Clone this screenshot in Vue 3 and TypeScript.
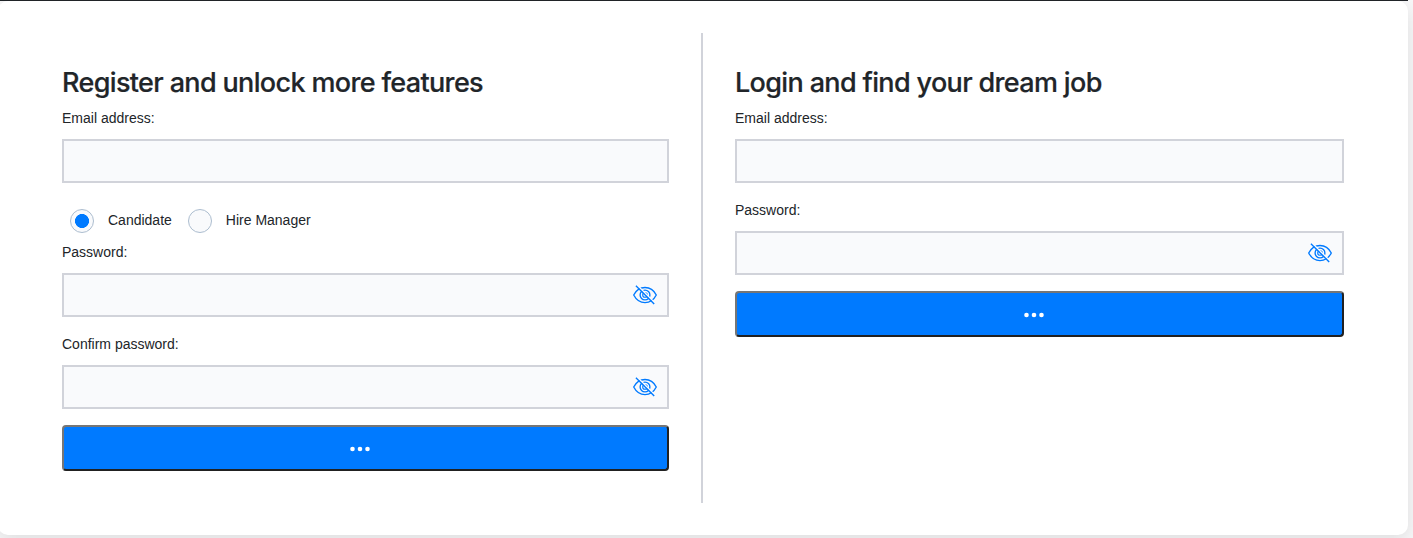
<script setup lang="ts">
import { ref } from 'vue'

interface Field {
  id: string
  label: string
  password: boolean
}

interface Panel {
  id: string
  title: string
  roles: string[]
  fields: Field[]
}

const role = ref('Candidate')

const panels: Panel[] = [
  {
    id: 'register',
    title: 'Register and unlock more features',
    roles: ['Candidate', 'Hire Manager'],
    fields: [
      { id: 'register-email', label: 'Email address:', password: false },
      { id: 'register-password', label: 'Password:', password: true },
      { id: 'register-confirm', label: 'Confirm password:', password: true },
    ],
  },
  {
    id: 'login',
    title: 'Login and find your dream job',
    roles: [],
    fields: [
      { id: 'login-email', label: 'Email address:', password: false },
      { id: 'login-password', label: 'Password:', password: true },
    ],
  },
]
</script>

<template>
  <main class="page">
    <div class="topline"></div>
    <div class="card">
      <form v-for="panel in panels" :key="panel.id" class="panel" :class="panel.id" @submit.prevent>
        <h2><span class="title">{{ panel.title }}</span></h2>
        <template v-for="(field, index) in panel.fields" :key="field.id">
          <label class="label" :for="field.id">{{ field.label }}</label>
          <div class="field">
            <input :id="field.id" :type="field.password ? 'password' : 'email'" />
            <svg v-if="field.password" class="eye" viewBox="0 0 24 24" fill="none" stroke="#007aff" stroke-width="1.35">
              <path d="M0.700 12C3.200 7.200 7.300 4.500 12 4.500S20.800 7.200 23.300 12C20.800 16.800 16.700 19.600 12 19.600S3.200 16.800 0.700 12Z" />
              <circle cx="12" cy="12" r="4.9" />
              <circle cx="12" cy="12" r="2.300" stroke-width="1.100" />
              <path d="M4.300 2.300L22.500 20.500" stroke="#f9fafc" stroke-width="1.500" />
              <path d="M2.900 2.700L21.200 21" />
            </svg>
          </div>
          <div v-if="index === 0 && panel.roles.length" class="roles">
            <label v-for="name in panel.roles" :key="name" class="role">
              <input v-model="role" type="radio" name="role" :value="name" />
              <span>{{ name }}</span>
            </label>
          </div>
        </template>
        <button type="submit" aria-label="Submit">
          <svg class="dots" viewBox="0 0 22 6" fill="#fff">
            <circle cx="3.500" cy="3" r="2.300" />
            <circle cx="11" cy="3" r="2.300" />
            <circle cx="18.500" cy="3" r="2.300" />
          </svg>
        </button>
      </form>
    </div>
  </main>
</template>

<style>
body {
  margin: 0;
  overflow: hidden;
}
</style>

<style scoped>
.page {
  box-sizing: border-box;
  height: 538px;
  padding-right: 5px;
  background: #f8f8f9;
  color: #212529;
  font: 14px/22px "Liberation Sans", Arial, sans-serif;
  overflow: hidden;
}

.topline {
  height: 1px;
  background: #212529;
}

.card {
  box-sizing: border-box;
  display: flex;
  height: 534px;
  margin-left: -2px;
  padding: 32px;
  border-radius: 10px;
  background: #fff;
  box-shadow: 0 6px 20px rgba(0, 0, 0, 0.11);
}

.panel {
  box-sizing: border-box;
  padding: 32px;
}

.register {
  width: 673px;
  border-right: 2px solid #d1d3da;
}

.login {
  width: 673px;
}

h2 {
  height: 34px;
  margin: 0 0 8px;
  font: 500 27px/36px Inter, sans-serif;
  white-space: nowrap;
}

.title {
  letter-spacing: -0.65px;
  -webkit-text-stroke: 0.2px #212529;
}

.label {
  display: block;
  margin-bottom: 10px;
}

.field {
  position: relative;
  height: 44px;
  margin-bottom: 16px;
}

.field input {
  box-sizing: border-box;
  display: block;
  width: 100%;
  height: 44px;
  margin: 0;
  padding: 8px 44px 8px 12px;
  border: 2px solid #d1d3da;
  border-radius: 0;
  background: #f9fafc;
  outline: none;
}

.eye {
  position: absolute;
  top: 10px;
  right: 12px;
  width: 24px;
  height: 24px;
}

.roles {
  display: flex;
  gap: 16px;
  height: 42px;
  padding-left: 8px;
}

.role {
  display: flex;
  align-items: center;
  gap: 14px;
}

.role input {
  appearance: none;
  box-sizing: border-box;
  width: 24px;
  height: 24px;
  margin: 2px 0 0;
  border: 1px solid #acbdcf;
  border-radius: 50%;
  background: #f9fafc;
}

.role input:checked {
  background: radial-gradient(circle, #007aff 6.7px, #f9fafc 7.3px);
}

button {
  box-sizing: border-box;
  display: flex;
  align-items: center;
  justify-content: center;
  width: 100%;
  height: 46px;
  padding: 1px 11px 0 0;
  border: 2px solid;
  border-color: #767676 #212121 #212121 #767676;
  border-radius: 4px;
  background: #007aff;
}

.dots {
  width: 22px;
  height: 6px;
}
</style>
